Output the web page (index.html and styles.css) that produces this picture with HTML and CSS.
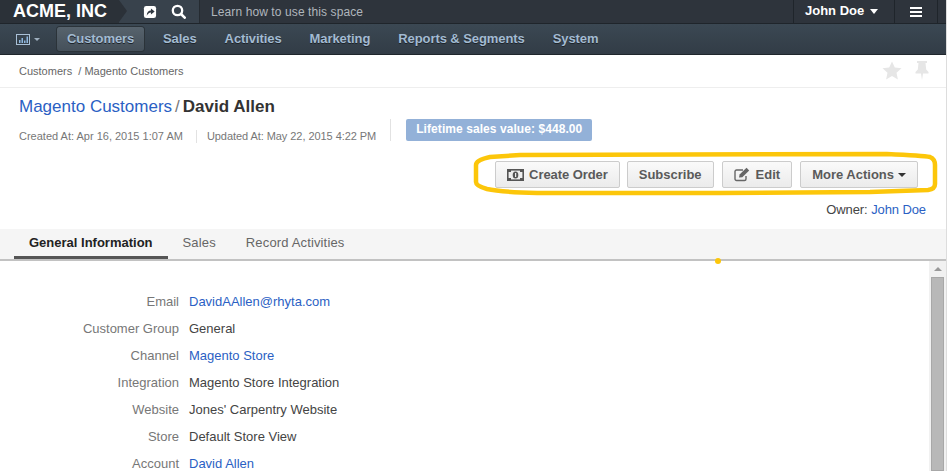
FILE: index.html
```html
<!DOCTYPE html>
<html lang="en">
<head>
  <meta charset="UTF-8">
  <title>David Allen - Magento Customers</title>
  <link rel="stylesheet" href="styles.css">
</head>
<body>

<header class="topbar">
  <div class="brand">ACME, INC</div>
  <div class="quick">
    <svg width="14" height="14" viewBox="0 0 15 15"><rect x="1" y="1" width="13" height="13" rx="2.5" fill="#fff"/><path d="M4 11.500c0-3.500 2-5.500 4.500-5.500V3.800L12.500 7 8.500 10.200V8C6.500 8 5 9.500 4 11.500z" fill="#2f3740"/></svg>
    <svg width="15" height="15" viewBox="0 0 15 15"><circle cx="6.500" cy="6.500" r="4.700" fill="none" stroke="#fff" stroke-width="2.300"/><path d="M10 10l3.700 3.700" stroke="#fff" stroke-width="2.600" stroke-linecap="round"/></svg>
  </div>
  <div class="hint">Learn how to use this space</div>
  <div class="user">John Doe <span class="caret"></span></div>
  <div class="burger"><span></span><span></span><span></span></div>
</header>

<nav class="menu">
  <div class="dash">
    <svg width="14" height="11" viewBox="0 0 14 11"><rect x=".5" y=".5" width="13" height="10" fill="none" stroke="#a9c0d6"/><path d="M3 9V6h1.500v3zM5.500 9V4H7v5zM8 9V6.500h1.500V9zM10.500 9V2.500H12V9z" fill="#8fb8e0"/></svg>
    <span class="caret caret-grey"></span>
  </div>
  <a class="menu-item active">Customers</a>
  <a class="menu-item">Sales</a>
  <a class="menu-item">Activities</a>
  <a class="menu-item">Marketing</a>
  <a class="menu-item">Reports &amp; Segments</a>
  <a class="menu-item">System</a>
</nav>

<div class="crumbs">
  <span>Customers&nbsp; / Magento Customers</span>
  <div class="crumb-icons">
    <svg width="20" height="19" viewBox="0 0 20 19"><path d="M10 .5l2.800 6.100 6.700.7-5 4.500 1.400 6.600L10 15.100l-5.900 3.300 1.400-6.600-5-4.500 6.700-.7z" fill="#e6e6e6"/></svg>
    <svg width="14" height="19" viewBox="0 0 14 19"><path d="M2 0h10v2h-1.500l.7 6.500L13.500 11v1.500H8L7 19l-1-6.500H.5V11l2.300-2.500L3.500 2H2z" fill="#e6e6e6"/></svg>
  </div>
</div>

<section class="head">
  <h1 class="title"><a>Magento Customers</a><span class="sep">/</span><b>David Allen</b></h1>
  <div class="meta">
    <span class="date">Created At: Apr 16, 2015 1:07 AM</span>
    <span class="date date-next">Updated At: May 22, 2015 4:22 PM</span>
    <div class="badge-wrap"><span class="badge">Lifetime sales value: $448.00</span></div>
  </div>
  <div class="actions">
    <svg class="ring" width="478" height="60" viewBox="0 0 478 60"><path d="M50 15L417 14C440 15 455 16 460 17Q465 19 465 25L465 44Q465 49 458 50L400 52L250 53L67 53Q30 52 17 49Q6 46 6 42L6 25Q6 20 20 17Z" fill="none" stroke="#fcc60a" stroke-width="4.500"/></svg>
    <a class="btn btn-order">
      <svg width="17" height="12" viewBox="0 0 17 12"><rect x=".8" y=".8" width="15.400" height="10.400" fill="#eee" stroke="#555" stroke-width="1.600"/><path d="M1 1h3v2H1zM13 1h3v2h-3zM1 9h3v2H1zM13 9h3v2h-3z" fill="#555"/><ellipse cx="8.500" cy="6" rx="2.800" ry="3.500" fill="#555"/><rect x="8" y="4" width="1.200" height="4" fill="#eee"/></svg>
      Create Order
    </a>
    <a class="btn">Subscribe</a>
    <a class="btn btn-edit">
      <svg width="17" height="15" viewBox="0 0 17 15"><path d="M12 9v3a1.500 1.500 0 0 1-1.500 1.500h-8A1.500 1.500 0 0 1 1 12V4.500A1.500 1.500 0 0 1 2.500 3H9" fill="none" stroke="#666" stroke-width="1.400"/><path d="M5 10.500l.6-3L12.500 .8l2.700 2.700-6.900 6.700z" fill="#666"/></svg>
      Edit
    </a>
    <a class="btn">More Actions <span class="caret caret-dark"></span></a>
  </div>
  <div class="owner">Owner: <a>John Doe</a></div>
</section>

<div class="tabs">
  <a class="tab active">General Information</a>
  <a class="tab">Sales</a>
  <a class="tab">Record Activities</a>
  <span class="dot"></span>
</div>

<main class="body">
  <dl class="info">
    <div class="row"><dt>Email</dt><dd><a>DavidAAllen@rhyta.com</a></dd></div>
    <div class="row"><dt>Customer Group</dt><dd>General</dd></div>
    <div class="row"><dt>Channel</dt><dd><a>Magento Store</a></dd></div>
    <div class="row"><dt>Integration</dt><dd>Magento Store Integration</dd></div>
    <div class="row"><dt>Website</dt><dd>Jones' Carpentry Website</dd></div>
    <div class="row"><dt>Store</dt><dd>Default Store View</dd></div>
    <div class="row"><dt>Account</dt><dd><a>David Allen</a></dd></div>
  </dl>
  <div class="scroll">
    <span class="arrow"></span>
    <span class="thumb"></span>
  </div>
</main>

</body>
</html>
```

FILE: styles.css
```css
*{
	box-sizing: border-box;
}
html{
	background: #fff;
}
body{
	margin: 0;
	width: 947px;
	height: 471px;
	overflow: hidden;
	font-family: "Liberation Sans", Arial, sans-serif;
	font-size: 13px;
	color: #444;
	background: #fff;
	border-right: 1px solid #ddd;
}
a{
	color: #2b5fc4;
}

/* top bar */
.topbar{
	height: 24px;
	display: flex;
	align-items: center;
	background: #2e343c;
	color: #fff;
	border-bottom: 1px solid #1f252b;
	margin-right: -2px;
}
.brand{
	position: relative;
	width: 119px;
	height: 23px;
	padding-left: 13px;
	font-size: 18px;
	font-weight: bold;
	line-height: 22px;
	background: #2b3138;
}
.brand::after{
	content: "";
	position: absolute;
	left: 119px;
	top: 0;
	border-left: 8px solid #2b3138;
	border-top: 11.5px solid transparent;
	border-bottom: 11.5px solid transparent;
}
.quick{
	width: 81px;
	height: 23px;
	display: flex;
	align-items: center;
	gap: 14px;
	padding-left: 24px;
	background: #38424c;
	border-right: 1px solid #252b31;
}
.hint{
	flex: 1;
	padding-left: 11px;
	color: #b0b6bc;
	font-size: 12px;
	letter-spacing: .1px;
}
.user{
	width: 102px;
	height: 23px;
	line-height: 21px;
	padding-left: 11px;
	font-size: 13px;
	font-weight: bold;
	border-left: 1px solid #1f252b;
	border-right: 1px solid #1f252b;
}
.burger{
	width: 43px;
	height: 23px;
	display: flex;
	flex-direction: column;
	justify-content: center;
	gap: 2px;
	padding: 0 15px;
	border-right: 1px solid #1f252b;
	margin-right: 10px;
}
.burger span{
	display: block;
	height: 2px;
	background: #fff;
}
.caret{
	display: inline-block;
	width: 0;
	height: 0;
	border-left: 4.500px solid transparent;
	border-right: 4.500px solid transparent;
	border-top: 5px solid #fff;
	vertical-align: middle;
	margin-left: 2px;
}
.caret-grey{
	border-left-width: 3px;
	border-right-width: 3px;
	border-top: 3px solid #9fb0c0;
	margin-left: 0;
}
.caret-dark{
	border-left-width: 4px;
	border-right-width: 4px;
	border-top: 4px solid #333;
	margin-left: 0;
}

/* main menu */
.menu{
	height: 31px;
	display: flex;
	align-items: center;
	background: linear-gradient(#3b4853, #323c46);
	border-bottom: 1px solid #1f262c;
	margin-right: -2px;
}
.dash{
	width: 57px;
	padding-left: 16px;
	display: flex;
	align-items: center;
	gap: 4px;
}
.menu-item{
	color: #a3bbd2;
	font-size: 13px;
	font-weight: bold;
	letter-spacing: -.08px;
	line-height: 24px;
	padding: 0 14px;
	text-shadow: 0 1px 0 #1d2329;
}
.menu-item.active{
	width: 87px;
	padding: 0 10px;
	background: linear-gradient(#57636d, #45505a);
	border-radius: 3px;
	box-shadow: 0 0 0 1px #2b3339;
	color: #a3bbd2;
	margin-right: 5px;
}

/* breadcrumbs */
.crumbs{
	height: 33px;
	display: flex;
	align-items: center;
	justify-content: space-between;
	padding: 0 17px 0 19px;
	border-bottom: 1px solid #eee;
	font-size: 11px;
	color: #666;
}
.crumb-icons{
	display: flex;
	align-items: center;
	gap: 13px;
	margin-top: -2px;
}

/* page head */
.head{
	height: 141px;
	padding: 8px 20px 0 19px;
}
.title{
	margin: 0;
	font-size: 17px;
	font-weight: normal;
	line-height: 22px;
}
.title b{
	color: #333;
}
.sep{
	color: #777;
	margin: 0 3px;
}
.meta{
	display: flex;
	align-items: flex-end;
	height: 24px;
	margin-top: 1px;
	font-size: 11px;
	color: #777;
}
.date{
	line-height: 13px;
}
.date-next{
	margin-left: 13px;
	padding-left: 10px;
	border-left: 1px solid #e2e2e2;
	letter-spacing: -.06px;
}
.badge-wrap{
	align-self: flex-start;
	margin-left: 14px;
	padding-left: 15px;
	border-left: 1px solid #e2e2e2;
	height: 22px;
}
.badge{
	display: block;
	height: 22px;
	line-height: 21px;
	padding: 0 10px;
	font-size: 12px;
	font-weight: bold;
	letter-spacing: .07px;
	color: #fff;
	background: #93b1d8;
	border-radius: 2px;
}
.actions{
	position: relative;
	display: flex;
	justify-content: flex-end;
	gap: 8px;
	margin-top: 18px;
	padding-right: 8px;
}
.ring{
	position: absolute;
	right: -22px;
	top: -21px;
}
.btn{
	display: flex;
	align-items: center;
	gap: 4px;
	height: 27px;
	padding: 0 11px;
	font-size: 13px;
	font-weight: bold;
	color: #5a5a5a;
	background: linear-gradient(#fafafa, #ebebeb);
	border: 1px solid #ccc;
	border-radius: 2px;
}
.btn-order{
	gap: 5px;
	letter-spacing: -.07px;
	margin-right: -1px;
}
.btn-edit{
	gap: 5px;
}
.owner{
	margin-top: 14px;
	text-align: right;
	color: #444;
	letter-spacing: -.1px;
}

/* tabs */
.tabs{
	position: relative;
	height: 32px;
	display: flex;
	padding-left: 14px;
	background: #f5f5f5;
	border-bottom: 2px solid #c2c2c2;
	font-size: 13px;
}
.tab{
	height: 30px;
	line-height: 28px;
	padding: 0 15px;
	color: #666;
	letter-spacing: .15px;
}
.tab.active{
	color: #222;
	font-weight: bold;
	letter-spacing: 0;
	border-bottom: 3px solid #555;
}
.dot{
	position: absolute;
	left: 715px;
	top: 29px;
	width: 6px;
	height: 6px;
	border-radius: 50%;
	background: #fcc60a;
}

/* content */
.body{
	height: 210px;
	display: flex;
	justify-content: space-between;
	overflow: hidden;
}
.info{
	margin: 33px 0 0;
}
.row{
	display: flex;
	height: 27px;
	line-height: 16px;
}
.row dt{
	width: 179px;
	text-align: right;
	color: #777;
}
.row dd{
	margin: 0 0 0 10px;
	color: #444;
}
.scroll{
	width: 17px;
	background: #f1f1f1;
	display: flex;
	flex-direction: column;
	align-items: center;
}
.arrow{
	margin-top: 6px;
	border-left: 4px solid transparent;
	border-right: 4px solid transparent;
	border-bottom: 4px solid #999;
}
.thumb{
	flex: 1;
	width: 13px;
	margin-top: 6px;
	background: #b8b8b8;
	border: 1px solid #a8a8a8;
}
```
